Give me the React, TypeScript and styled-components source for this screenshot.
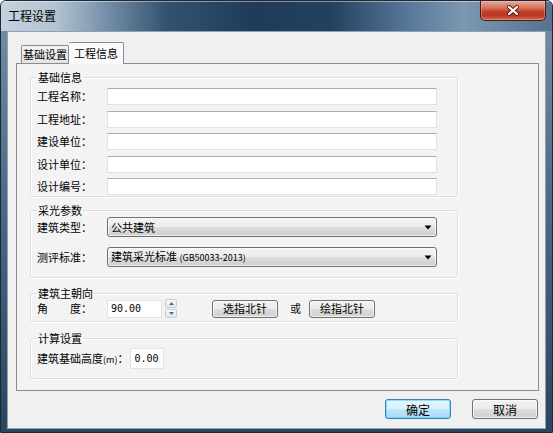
import React from 'react';
import styled, {createGlobalStyle, css} from 'styled-components';

interface IsActive {
    $active?: boolean
}

interface IsDefault {
    $default?: boolean
}

interface HasOffset {
    $offset?: number
}

const infoFields = ['工程名称：', '工程地址：', '建设单位：', '设计单位：', '设计编号：']

const CloseIcon = () => (
    <svg width="14" height="11" viewBox="0 0 14 11">
        <path d="M3 2 L11 9 M11 2 L3 9" stroke="#5a1c12" strokeWidth="4" strokeLinecap="round"/>
        <path d="M3 2 L11 9 M11 2 L3 9" stroke="#ffffff" strokeWidth="2.2" strokeLinecap="round"/>
    </svg>
)

const ArrowDown = () => (
    <svg width="8" height="5" viewBox="0 0 8 5">
        <path d="M0.5 0.5 H7.5 L4 4.5 Z" fill="#000"/>
    </svg>
)

const SpinArrow = ({up}: { up: boolean }) => (
    <svg width="5" height="3" viewBox="0 0 5 3">
        {up ? <path d="M0 3 H5 L2.5 0 Z" fill="#4d6e93"/> : <path d="M0 0 H5 L2.5 3 Z" fill="#4d6e93"/>}
    </svg>
)

const App = () => {
    return (
        <>
            <GlobalStyle/>
            <Window>
                <TitleBar>
                    <Title>工程设置</Title>
                    <CloseButton><CloseIcon/></CloseButton>
                </TitleBar>
                <Client>
                    <TabStrip>
                        <Tab>基础设置</Tab>
                        <Tab $active>工程信息</Tab>
                    </TabStrip>
                    <TabPanel>
                        <Group>
                            <Legend>基础信息</Legend>
                            <InfoList>
                                {
                                    infoFields.map((label) => (
                                        <FieldRow key={label}>
                                            <Label>{label}</Label>
                                            <TextBox/>
                                        </FieldRow>
                                    ))
                                }
                            </InfoList>
                        </Group>
                        <DaylightGroup>
                            <Legend>采光参数</Legend>
                            <SelectList>
                                <FieldRow>
                                    <Label>建筑类型：</Label>
                                    <Select>
                                        <span>公共建筑</span>
                                        <ArrowDown/>
                                    </Select>
                                </FieldRow>
                                <FieldRow>
                                    <Label>测评标准：</Label>
                                    <Select>
                                        <span>建筑采光标准 <Small>(GB50033-2013)</Small></span>
                                        <ArrowDown/>
                                    </Select>
                                </FieldRow>
                            </SelectList>
                        </DaylightGroup>
                        <OrientGroup>
                            <Legend>建筑主朝向</Legend>
                            <FieldRow>
                                <Label>角{'\u3000\u3000'}度：</Label>
                                <NumberBox>90.00</NumberBox>
                                <Spinner>
                                    <SpinButton><SpinArrow up/></SpinButton>
                                    <SpinButton><SpinArrow up={false}/></SpinButton>
                                </Spinner>
                                <PushButton $offset={35}>选指北针</PushButton>
                                <OrText>或</OrText>
                                <PushButton>绘指北针</PushButton>
                            </FieldRow>
                        </OrientGroup>
                        <CalcGroup>
                            <Legend>计算设置</Legend>
                            <FieldRow>
                                <span>建筑基础高度<Small>(m)</Small>：</span>
                                <HeightBox>0.00</HeightBox>
                            </FieldRow>
                        </CalcGroup>
                    </TabPanel>
                    <ButtonBar>
                        <DialogButton $default>确定</DialogButton>
                        <DialogButton>取消</DialogButton>
                    </ButtonBar>
                </Client>
            </Window>
        </>
    );
};

export default App;

const GlobalStyle = createGlobalStyle`
html, body {
  margin: 0;
  padding: 0;
  background: #ffffff;
}
body {
  font-family: "Noto Sans CJK SC", "Liberation Sans", sans-serif;
  font-size: 11px;
  line-height: 13px;
  color: #000;
}
`

const Window = styled.div`
box-sizing: border-box;
width: 553px;
height: 433px;
display: flex;
flex-direction: column;
border: 1px solid #1c2a38;
border-radius: 6px 6px 0 0;
overflow: hidden;
background: linear-gradient(180deg, #7690a9 0%, #4d6a86 45%, #2a4560 100%);
`

const TitleBar = styled.div`
height: 30px;
flex: none;
display: flex;
align-items: flex-start;
box-shadow: inset 0 1px 0 rgba(255, 255, 255, .45);
background: linear-gradient(90deg, #c4d2de 0%, #b2c3d2 10%, #7690a9 19%, #34526f 30%, #1f3b59 46%, #24415f 60%, #58789a 74%, #7c97b0 84%, #56728e 100%);
`

const Title = styled.div`
padding-left: 7px;
font-size: 12px;
line-height: 30px;
color: #000;
`

const CloseButton = styled.div`
margin: 0 6px 0 auto;
width: 66px;
height: 20px;
box-sizing: border-box;
display: flex;
align-items: center;
justify-content: center;
border: 1px solid #4d1810;
border-top: none;
border-radius: 0 0 5px 5px;
background: linear-gradient(180deg, #e7a996 0%, #d77560 35%, #c2412a 55%, #b8361f 75%, #d46a50 100%);
box-shadow: inset 0 0 0 1px rgba(255, 210, 200, .35);
`

const Client = styled.div`
flex: 1;
margin: 0 6px 3px;
background: #f0f0f0;
border: 1px solid #8ea0b2;
display: flex;
flex-direction: column;
`

const TabStrip = styled.div`
display: flex;
align-items: flex-end;
height: 21px;
margin: 10px 0 0 13px;
`

const Tab = styled.div<IsActive>`
box-sizing: border-box;
display: flex;
align-items: center;
justify-content: center;
white-space: nowrap;
border: 1px solid #898c95;
border-bottom: none;
border-radius: 2px 2px 0 0;
font-size: 11px;
${({$active}: IsActive) =>
    $active ? css`
        position: relative;
        z-index: 1;
        width: 55px;
        height: 22px;
        margin: 0 0 -1px 0;
        background: #fafafa;
        border-left: none;
    ` : css`
        width: 48px;
        height: 18px;
        background: linear-gradient(180deg, #f2f2f2 0%, #e4e4e4 100%);
    `};
`

const TabPanel = styled.div`
box-sizing: border-box;
height: 328px;
margin: 0 6px 0 8px;
padding: 7px 0 0 13px;
border: 1px solid #898c95;
background: #f3f3f3;
display: flex;
flex-direction: column;
`

const Group = styled.fieldset`
box-sizing: border-box;
width: 428px;
min-width: 0;
margin: 0;
padding: 5px 18px 1px 6px;
border: 1px solid #dedede;
border-radius: 3px;
box-shadow: inset 1px 1px 0 #ffffff, 1px 1px 0 #ffffff;
`

const DaylightGroup = styled(Group)`
margin-top: 7px;
padding: 1px 18px 10px 6px;
`

const OrientGroup = styled(Group)`
margin-top: 9px;
padding: 0 18px 3px 6px;
`

const CalcGroup = styled(Group)`
margin-top: 10px;
padding: 4px 18px 9px 6px;
`

const Legend = styled.legend`
padding: 0 1px;
margin-left: 0;
font-size: 11px;
line-height: 12px;
`

const InfoList = styled.div`
display: flex;
flex-direction: column;
gap: 5.5px;
`

const SelectList = styled.div`
display: flex;
flex-direction: column;
gap: 10px;
`

const FieldRow = styled.div`
display: flex;
align-items: center;
`

const Label = styled.span`
width: 70px;
flex: none;
white-space: nowrap;
`

const Small = styled.span`
font-size: 9px;
`

const TextBox = styled.div`
box-sizing: border-box;
width: 330px;
height: 17px;
background: #ffffff;
border: 1px solid #dfe3e8;
border-top-color: #abadb3;
`

const Select = styled.div`
box-sizing: border-box;
width: 330px;
height: 20px;
display: flex;
align-items: center;
justify-content: space-between;
padding: 0 4px 0 3px;
border: 1px solid #707070;
border-radius: 3px;
background: linear-gradient(180deg, #f3f3f3 0%, #ececec 48%, #dddddd 52%, #cfcfcf 100%);
box-shadow: inset 0 0 0 1px rgba(255, 255, 255, .6);
`

const NumberBox = styled.div`
box-sizing: border-box;
width: 55px;
height: 18px;
padding: 0 3px;
display: flex;
align-items: center;
background: #ffffff;
border: 1px solid #dfe3e8;
font-family: "DejaVu Sans Mono", "Liberation Mono", monospace;
font-size: 10px;
`

const HeightBox = styled(NumberBox)`
width: 34px;
height: 21px;
margin-left: 2px;
`

const Spinner = styled.div`
display: flex;
flex-direction: column;
margin-left: 3px;
gap: 1px;
`

const SpinButton = styled.div`
box-sizing: border-box;
width: 12px;
height: 9px;
display: flex;
align-items: center;
justify-content: center;
border: 1px solid #c5ccd4;
border-radius: 2px;
background: linear-gradient(180deg, #f7f9fb 0%, #e2e7ec 100%);
`

const PushButton = styled.div<HasOffset>`
box-sizing: border-box;
width: 66px;
height: 18px;
margin-left: ${({$offset}: HasOffset) => $offset ?? 0}px;
display: flex;
align-items: center;
justify-content: center;
border: 1px solid #707070;
border-radius: 3px;
background: linear-gradient(180deg, #f2f2f2 0%, #ebebeb 48%, #dddddd 52%, #cfcfcf 100%);
box-shadow: inset 0 0 0 1px rgba(255, 255, 255, .7);
font-size: 11px;
`

const OrText = styled.span`
margin: 0 8px 0 12px;
`

const ButtonBar = styled.div`
display: flex;
justify-content: flex-end;
gap: 21px;
margin: 8px 7px 0 0;
`

const DialogButton = styled.div<IsDefault>`
box-sizing: border-box;
width: 66px;
height: 20px;
display: flex;
align-items: center;
justify-content: center;
border: 1px solid ${({$default}: IsDefault) => $default ? '#3c7fb1' : '#707070'};
border-radius: 3px;
background: ${({$default}: IsDefault) => $default
    ? 'linear-gradient(180deg, #eaf6fd 0%, #d9f0fc 48%, #bee6fd 52%, #a7d9f5 100%)'
    : 'linear-gradient(180deg, #f2f2f2 0%, #ebebeb 48%, #dddddd 52%, #cfcfcf 100%)'};
box-shadow: inset 0 0 0 1px ${({$default}: IsDefault) => $default ? 'rgba(72, 216, 251, .6)' : 'rgba(255, 255, 255, .7)'};
font-size: 12px;
`
